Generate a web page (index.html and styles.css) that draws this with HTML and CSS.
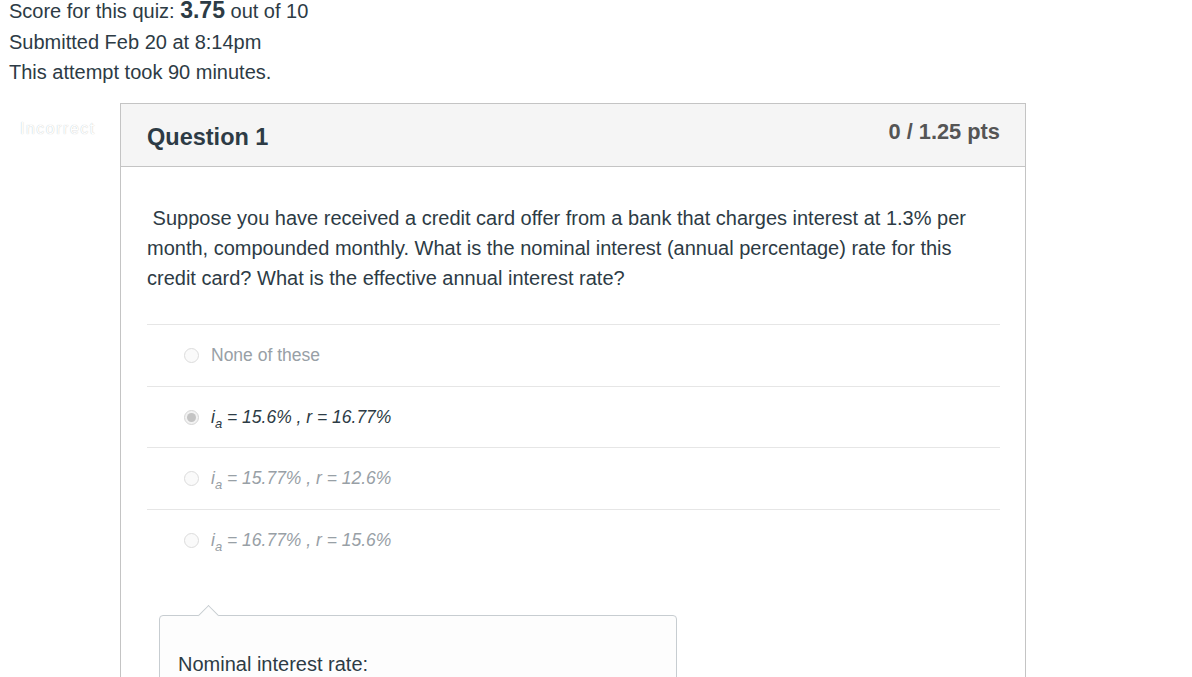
FILE: index.html
```html
<!DOCTYPE html>
<html>
<head>
<meta charset="utf-8">
<link rel="stylesheet" href="styles.css">
</head>
<body>
<div class="summary">
  <div class="line first">Score for this quiz: <strong class="score">3.75</strong> out of 10</div>
  <div class="line">Submitted Feb 20 at 8:14pm</div>
  <div class="line">This attempt took 90 minutes.</div>
</div>
<div class="qrow">
  <div class="flag">Incorrect</div>
  <div class="question">
    <div class="qhead">
      <div class="qtitle">Question 1</div>
      <div class="qpts">0 / 1.25 pts</div>
    </div>
    <div class="qbody">
      <p class="qtext">&nbsp;Suppose you have received a credit card offer from a bank that charges interest at 1.3% per month, compounded monthly. What is the nominal interest (annual percentage) rate for this credit card? What is the effective annual interest rate?</p>
      <div class="answers">
        <div class="answer"><span class="radio"></span><span class="atext plain">None of these</span></div>
        <div class="answer selected"><span class="radio"></span><span class="atext"><i>i<sub>a</sub></i> = 15.6% , <i>r</i> = 16.77%</span></div>
        <div class="answer"><span class="radio"></span><span class="atext"><i>i<sub>a</sub></i> = 15.77% , <i>r</i> = 12.6%</span></div>
        <div class="answer"><span class="radio"></span><span class="atext"><i>i<sub>a</sub></i> = 16.77% , <i>r</i> = 15.6%</span></div>
      </div>
      <div class="comment">
        <div class="ctext">Nominal interest rate:</div>
      </div>
    </div>
  </div>
</div>
</body>
</html>
```
FILE: styles.css
```css
html, body {
  margin: 0;
  padding: 0;
  background: #fff;
  overflow: hidden;
}
body {
  font-family: "Liberation Sans", Arial, sans-serif;
  color: #2d3b45;
  font-size: 20px;
}
.summary {
  padding: 0 0 0 9px;
}
.line {
  line-height: 30px;
}
.line.first {
  line-height: 21px;
  margin-bottom: 5px;
}
.score {
  font-size: 23px;
}
.qrow {
  display: flex;
  margin-top: 16px;
}
.flag {
  width: 120px;
  flex: none;
  box-sizing: border-box;
  padding: 17px 0 0 20px;
  font-size: 16px;
  color: #fff;
  text-shadow: 0 0 1px #b3b9bd;
  letter-spacing: 1.5px;
}
.question {
  width: 906px;
  flex: none;
  box-sizing: border-box;
  border: 1px solid #c4c4c4;
  border-bottom: none;
  height: 600px;
}
.qhead {
  background: #f5f5f5;
  border-bottom: 1px solid #c4c4c4;
  height: 62px;
  display: flex;
  justify-content: space-between;
  padding: 0 25px 0 26px;
}
.qtitle {
  font-weight: bold;
  font-size: 23.5px;
  padding-top: 20px;
}
.qpts {
  font-weight: bold;
  font-size: 21.8px;
  color: #555;
  padding-top: 15px;
}
.qbody {
  padding: 36px 25px 0 26px;
}
.qtext {
  margin: 0;
  line-height: 30px;
}
.answers {
  margin-top: 31px;
  border-top: 1px solid #e6e6e6;
}
.answer {
  display: flex;
  align-items: center;
  height: 59.5px;
  border-bottom: 1px solid #e6e6e6;
  padding-left: 37px;
  padding-top: 1px;
  box-sizing: content-box;
  color: #98a0a6;
  font-size: 17.5px;
}
.answer:last-child {
  border-bottom: none;
}
.answer.selected {
  color: #2d3b45;
}
.radio {
  width: 15px;
  height: 15px;
  border-radius: 50%;
  border: 1px solid #dcdcdc;
  background: #fafafa;
  box-sizing: border-box;
  margin-right: 12px;
  position: relative;
}
.selected .radio::after {
  content: "";
  position: absolute;
  left: 2px;
  top: 2px;
  width: 9px;
  height: 9px;
  border-radius: 50%;
  background: #c4c4c4;
}
.selected .radio {
  background: #f2f2f2;
  border-color: #d6d6d6;
}
.atext {
  font-style: italic;
}
.atext.plain {
  font-style: normal;
}
.atext sub {
  font-size: 13px;
  vertical-align: -5px;
  line-height: 0;
}
.comment {
  margin: 45px 0 0 12px;
  width: 518px;
  height: 80px;
  box-sizing: border-box;
  border: 1px solid #c7cdd1;
  border-radius: 4px;
  background: #fdfdfd;
  position: relative;
  padding: 37px 0 0 18px;
}
.comment::before {
  content: "";
  position: absolute;
  top: -8px;
  left: 41px;
  width: 14px;
  height: 14px;
  background: #fdfdfd;
  border-left: 1px solid #c7cdd1;
  border-top: 1px solid #c7cdd1;
  transform: rotate(45deg);
}
.ctext {
  font-size: 20px;
}
```
